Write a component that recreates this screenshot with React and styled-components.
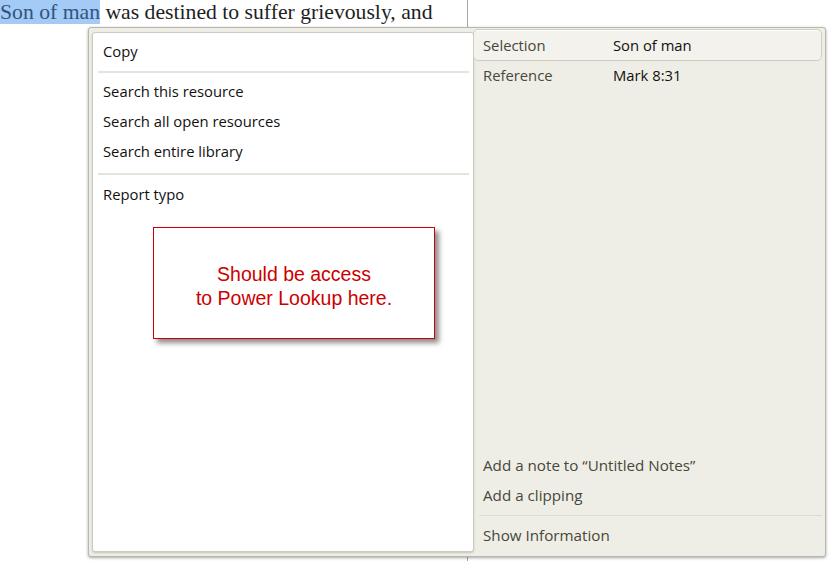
import styled, { createGlobalStyle } from "styled-components";

const GlobalStyle = createGlobalStyle`
  html, body {
    margin: 0;
    padding: 0;
    background: #ffffff;
  }
  #root {
    width: 830px;
    height: 561px;
    overflow: hidden;
    position: relative;
  }
`;

const Page = styled.div`
  position: relative;
  width: 830px;
  height: 561px;
  display: flex;
`;

const DocColumn = styled.div`
  width: 467px;
  height: 100%;
  border-right: 1px solid #a7a7a7;
`;

const DocLine = styled.div`
  font-family: "Liberation Serif", "DejaVu Serif", serif;
  font-size: 21.7px;
  line-height: 25px;
  color: #1e1e1e;
  white-space: nowrap;
`;

const Highlight = styled.span`
  background: #a3cbf5;
  color: #2f557f;
`;

const Popup = styled.div`
  position: absolute;
  top: 27px;
  left: 88px;
  width: 738px;
  height: 530px;
  box-sizing: border-box;
  background: #efeee6;
  border: 1px solid #b9b7aa;
  border-radius: 3px;
  box-shadow: 0 1px 3px rgba(0, 0, 0, 0.35);
  display: flex;
  padding: 1px 3px 4px 3px;
  font-family: "Open Sans", "Noto Sans", sans-serif;
  font-size: 14.8px;
`;

const MenuPanel = styled.div`
  width: 382px;
  margin-top: 3px;
  box-sizing: border-box;
  background: #ffffff;
  border: 1px solid #cdcbbf;
  border-radius: 3px;
  box-shadow: 0 1px 2px rgba(0, 0, 0, 0.18);
  padding: 3px 4px 0 5px;
  display: flex;
  flex-direction: column;
`;

const MenuItem = styled.div`
  height: 30px;
  line-height: 30px;
  padding-left: 5px;
  color: #111111;
`;

const Separator = styled.div`
  height: 0;
  border-top: 2px solid #e6e5dd;
  margin: ${(p) => p.$margin};
`;

const Callout = styled.div`
  margin: 18px 0 0 55px;
  width: 282px;
  height: 112px;
  box-sizing: border-box;
  padding-top: 5px;
  border: 1px solid #cc0000;
  background: #ffffff;
  box-shadow: 4px 4px 5px rgba(0, 0, 0, 0.45);
  display: flex;
  align-items: center;
  justify-content: center;
  text-align: center;
  font-family: "Liberation Sans", Arial, sans-serif;
  font-size: 19.5px;
  line-height: 24px;
  color: #cc0000;
`;

const InfoPanel = styled.div`
  flex: 1;
  display: flex;
  flex-direction: column;
  margin-bottom: 2px;
`;

const InfoRow = styled.div`
  height: ${(p) => (p.$active ? "32px" : "28px")};
  display: flex;
  align-items: center;
  padding-left: 9px;
  box-sizing: border-box;
  border-radius: 5px;
  border: 1px solid ${(p) => (p.$active ? "#cfcdc0" : "transparent")};
  background: ${(p) => (p.$active ? "#f3f2ec" : "transparent")};
  box-shadow: ${(p) => (p.$active ? "inset 0 1px 0 #ffffff" : "none")};
  margin-left: -1px;
`;

const Label = styled.span`
  width: 130px;
  color: #48473a;
`;

const Value = styled.span`
  color: #111111;
`;

const Spacer = styled.div`
  flex: 1;
`;

const Action = styled.div`
  height: 30px;
  line-height: 30px;
  padding-left: 9px;
  color: #48473a;
  font-size: 15.2px;
`;

const ActionSeparator = styled.div`
  border-top: 1px solid #dddcd2;
  margin: 5px 0 4px 5px;
`;

export default function App() {
  return (
    <>
      <GlobalStyle />
      <Page>
        <DocColumn>
          <DocLine>
            <Highlight>Son of man</Highlight> was destined to suffer grievously, and
          </DocLine>
        </DocColumn>
        <Popup>
          <MenuPanel>
            <MenuItem>Copy</MenuItem>
            <Separator $margin="5px 0 3px 0" />
            <MenuItem>Search this resource</MenuItem>
            <MenuItem>Search all open resources</MenuItem>
            <MenuItem>Search entire library</MenuItem>
            <Separator $margin="7px 0 4px 0" />
            <MenuItem>Report typo</MenuItem>
            <Callout>
              Should be access
              <br />
              to Power Lookup here.
            </Callout>
          </MenuPanel>
          <InfoPanel>
            <InfoRow $active>
              <Label>Selection</Label>
              <Value>Son of man</Value>
            </InfoRow>
            <InfoRow>
              <Label>Reference</Label>
              <Value>Mark 8:31</Value>
            </InfoRow>
            <Spacer />
            <Action>Add a note to “Untitled Notes”</Action>
            <Action>Add a clipping</Action>
            <ActionSeparator />
            <Action>Show Information</Action>
          </InfoPanel>
        </Popup>
      </Page>
    </>
  );
}
